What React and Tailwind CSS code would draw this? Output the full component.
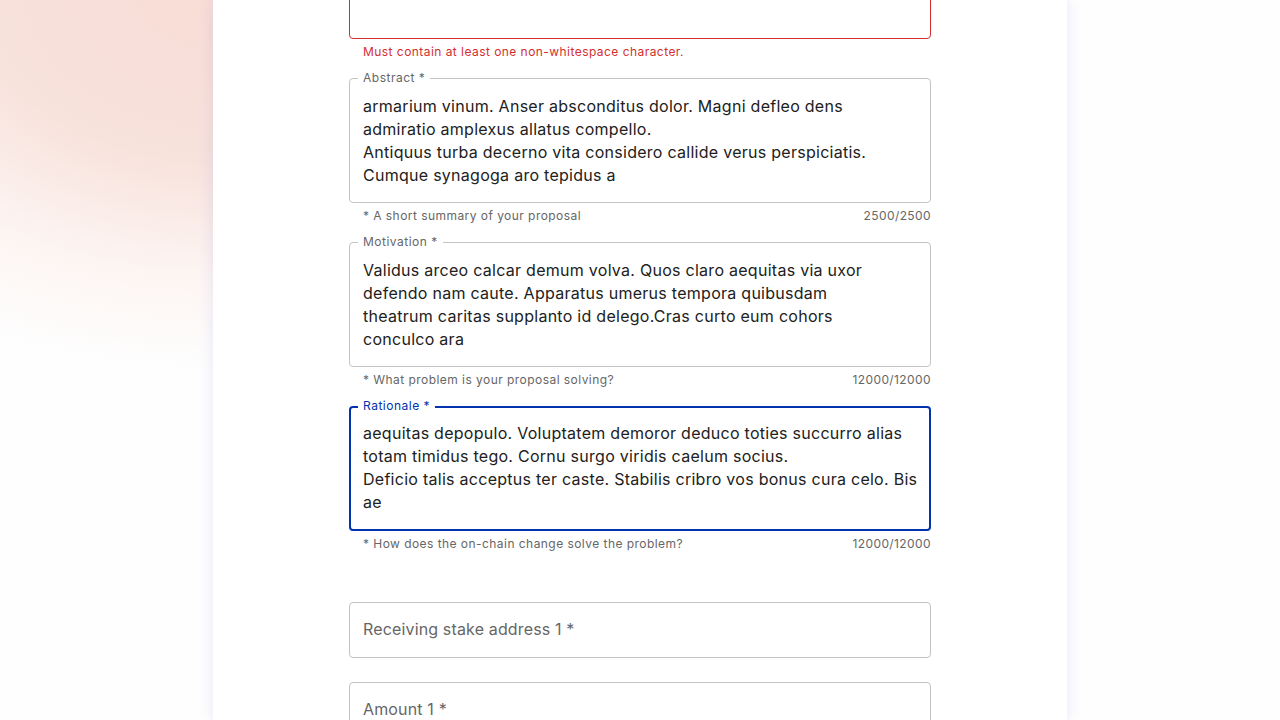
import React from "react";

const FONT = "font-['Inter','Liberation_Sans',sans-serif]";

function TextBox({ label, lines, focused, error }) {
  const border = focused
    ? "border-2 border-[#0033ad] pt-[13.5px] px-[12px]"
    : error
    ? "border border-[#d32f2f] pt-[15.5px] px-[13px]"
    : "border border-[#c4c4c4] pt-[15.5px] px-[13px]";
  return (
    <div className={`relative h-[125px] rounded-[4px] ${border}`}>
      {label && (
        <span
          className={`absolute ${focused ? "-top-[8px] left-[7px]" : "-top-[7px] left-[8px]"} bg-white px-[5px] text-[12px] leading-[12px] tracking-[0.5px] ${
            focused ? "text-[#0033ad]" : "text-[#666666]"
          }`}
        >
          {label}
        </span>
      )}
      <div className="text-[16px] leading-[23px] tracking-[0.27px] text-[#212121]">
        {lines.map((l, i) => (
          <div key={i} className="whitespace-nowrap">
            {l}
          </div>
        ))}
      </div>
    </div>
  );
}

function Helper({ text, count, error }) {
  return (
    <div className="mt-[3px] flex h-[20px] items-center justify-between text-[12px] leading-[20px] tracking-[0.45px]">
      <span className={`pl-[14px] ${error ? "text-[#d32f2f]" : "text-[#666666]"}`}>{text}</span>
      {count && <span className="text-[#666666] tracking-[0.4px]">{count}</span>}
    </div>
  );
}

function Input({ placeholder }) {
  return (
    <div className="flex h-[56px] items-center rounded-[4px] border border-[#c4c4c4] px-[13px]">
      <span className="-mt-[1px] text-[16px] leading-[23px] tracking-[0.15px] text-[#666666]">{placeholder}</span>
    </div>
  );
}

export default function App() {
  return (
    <div
      className={`${FONT} relative h-[720px] w-full overflow-hidden bg-[#fefefe] bg-[radial-gradient(ellipse_540px_380px_at_220px_-10px,#f9dcd6_0%,#f8e2dc_45%,rgba(252,240,236,0.65)_75%,rgba(255,255,255,0)_100%)]`}
    >
      <div className="mx-auto flow-root h-[720px] w-[854px] bg-white shadow-[0_0_14px_rgba(70,90,210,0.13)]">
        <div className="mx-auto -mt-[86px] flex w-[582px] flex-col">
          <TextBox lines={[]} error />
          <Helper text="Must contain at least one non-whitespace character." error />

          <div className="mt-[16px]">
            <TextBox
              label="Abstract *"
              lines={[
                "armarium vinum. Anser absconditus dolor. Magni defleo dens",
                "admiratio amplexus allatus compello.",
                "Antiquus turba decerno vita considero callide verus perspiciatis.",
                "Cumque synagoga aro tepidus a",
              ]}
            />
            <Helper text="* A short summary of your proposal" count="2500/2500" />
          </div>

          <div className="mt-[16px]">
            <TextBox
              label="Motivation *"
              lines={[
                "Validus arceo calcar demum volva. Quos claro aequitas via uxor",
                "defendo nam caute. Apparatus umerus tempora quibusdam",
                "theatrum caritas supplanto id delego.Cras curto eum cohors",
                "conculco ara",
              ]}
            />
            <Helper text="* What problem is your proposal solving?" count="12000/12000" />
          </div>

          <div className="mt-[16px]">
            <TextBox
              focused
              label="Rationale *"
              lines={[
                "aequitas depopulo. Voluptatem demoror deduco toties succurro alias",
                "totam timidus tego. Cornu surgo viridis caelum socius.",
                "Deficio talis acceptus ter caste. Stabilis cribro vos bonus cura celo. Bis",
                "ae",
              ]}
            />
            <Helper text="* How does the on-chain change solve the problem?" count="12000/12000" />
          </div>

          <div className="mt-[48px]">
            <Input placeholder="Receiving stake address 1 *" />
          </div>
          <div className="mt-[24px]">
            <Input placeholder="Amount 1 *" />
          </div>
        </div>
      </div>
    </div>
  );
}
